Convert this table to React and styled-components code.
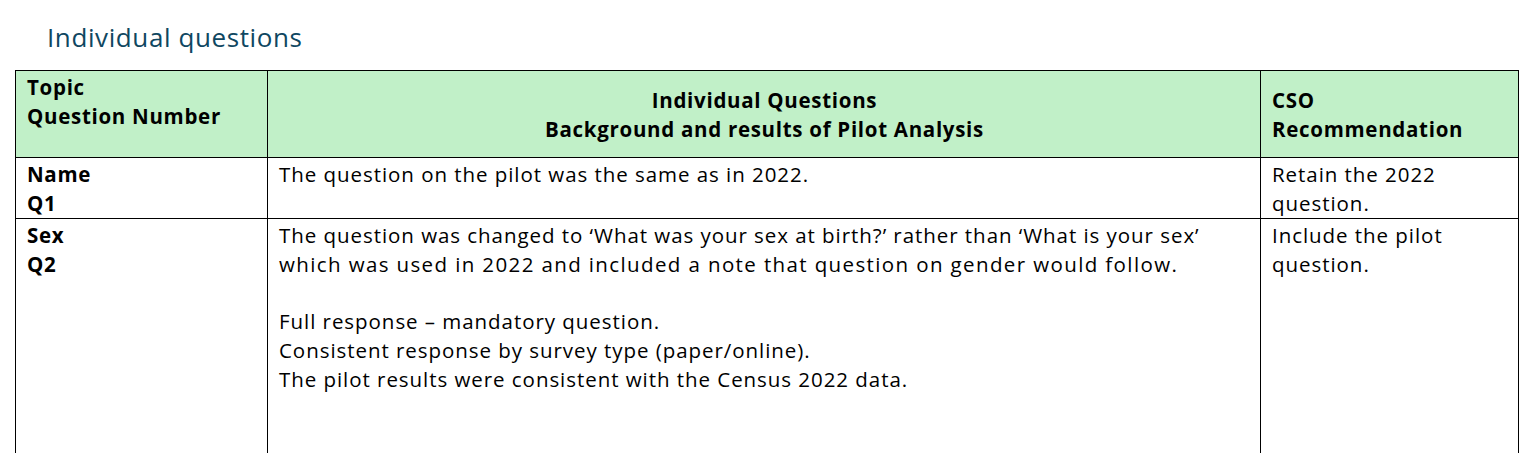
import React from "react";
import styled, { createGlobalStyle } from "styled-components";

const GlobalStyle = createGlobalStyle`
  html, body { margin: 0; padding: 0; background: #ffffff; }
  body {
    font-family: "Open Sans", "Liberation Sans", sans-serif;
    color: #000000;
  }
`;

const Page = styled.div`
  padding: 0 0 0 15px;
`;

const Title = styled.h2`
  margin: 17px 0 13px 0;
  padding-left: 32px;
  font-size: 26px;
  line-height: 40px;
  font-weight: 400;
  letter-spacing: 0.6px;
  color: #0f4761;
`;

const Table = styled.div`
  display: grid;
  grid-template-columns: 252px 993px 258px;
  width: 1504px;
  border-left: 1px solid #000;
  border-top: 1px solid #000;
  box-sizing: border-box;
  font-size: 20.5px;
  line-height: 28.75px;
`;

const Cell = styled.div`
  box-sizing: border-box;
  border-right: 1px solid #000;
  border-bottom: 1px solid #000;
  padding: 2px 10px 0 11px;
  min-height: ${(p) => p.$h}px;
  background: ${(p) => (p.$head ? "#c1f0c8" : "#ffffff")};
  font-weight: ${(p) => (p.$bold ? 700 : 400)};
  letter-spacing: ${(p) => (p.$bold ? "0.7px" : "0.95px")};
  display: flex;
  flex-direction: column;
  justify-content: ${(p) => (p.$middle ? "center" : "flex-start")};
  text-align: ${(p) => (p.$center ? "center" : "left")};
`;

const Line = styled.div`
  white-space: nowrap;
  min-height: 28.75px;
  ${(p) => (p.$ls != null ? `letter-spacing: ${p.$ls}px;` : "")}
`;

const rows = [
  {
    h: 61,
    topic: ["Name", "Q1"],
    body: ["The question on the pilot was the same as in 2022."],
    rec: ["Retain the 2022", "question."],
  },
  {
    h: 240,
    topic: ["Sex", "Q2"],
    body: [
      "The question was changed to \u2018What was your sex at birth?\u2019 rather than \u2018What is your sex\u2019",
      {
        t: "which was used in 2022 and included a note that question on gender would follow.",
        ls: 1.38,
      },
      "",
      "Full response \u2013 mandatory question.",
      "Consistent response by survey type (paper/online).",
      "The pilot results were consistent with the Census 2022 data.",
    ],
    rec: ["Include the pilot", "question."],
  },
];

const Lines = ({ items }) =>
  items.map((it, i) =>
    typeof it === "string" ? (
      <Line key={i}>{it}</Line>
    ) : (
      <Line key={i} $ls={it.ls}>
        {it.t}
      </Line>
    )
  );

export default function App() {
  return (
    <>
      <GlobalStyle />
      <Page>
        <Title>Individual questions</Title>
        <Table>
          <Cell $head $bold $h={87}>
            <Lines items={["Topic", "Question Number"]} />
          </Cell>
          <Cell $head $bold $middle $center $h={87}>
            <Lines
              items={[
                "Individual Questions",
                "Background and results of Pilot Analysis",
              ]}
            />
          </Cell>
          <Cell $head $bold $middle $h={87}>
            <Lines items={["CSO", "Recommendation"]} />
          </Cell>
          {rows.map((r, i) => (
            <React.Fragment key={i}>
              <Cell $bold $h={r.h}>
                <Lines items={r.topic} />
              </Cell>
              <Cell $h={r.h}>
                <Lines items={r.body} />
              </Cell>
              <Cell $h={r.h}>
                <Lines items={r.rec} />
              </Cell>
            </React.Fragment>
          ))}
        </Table>
      </Page>
    </>
  );
}
